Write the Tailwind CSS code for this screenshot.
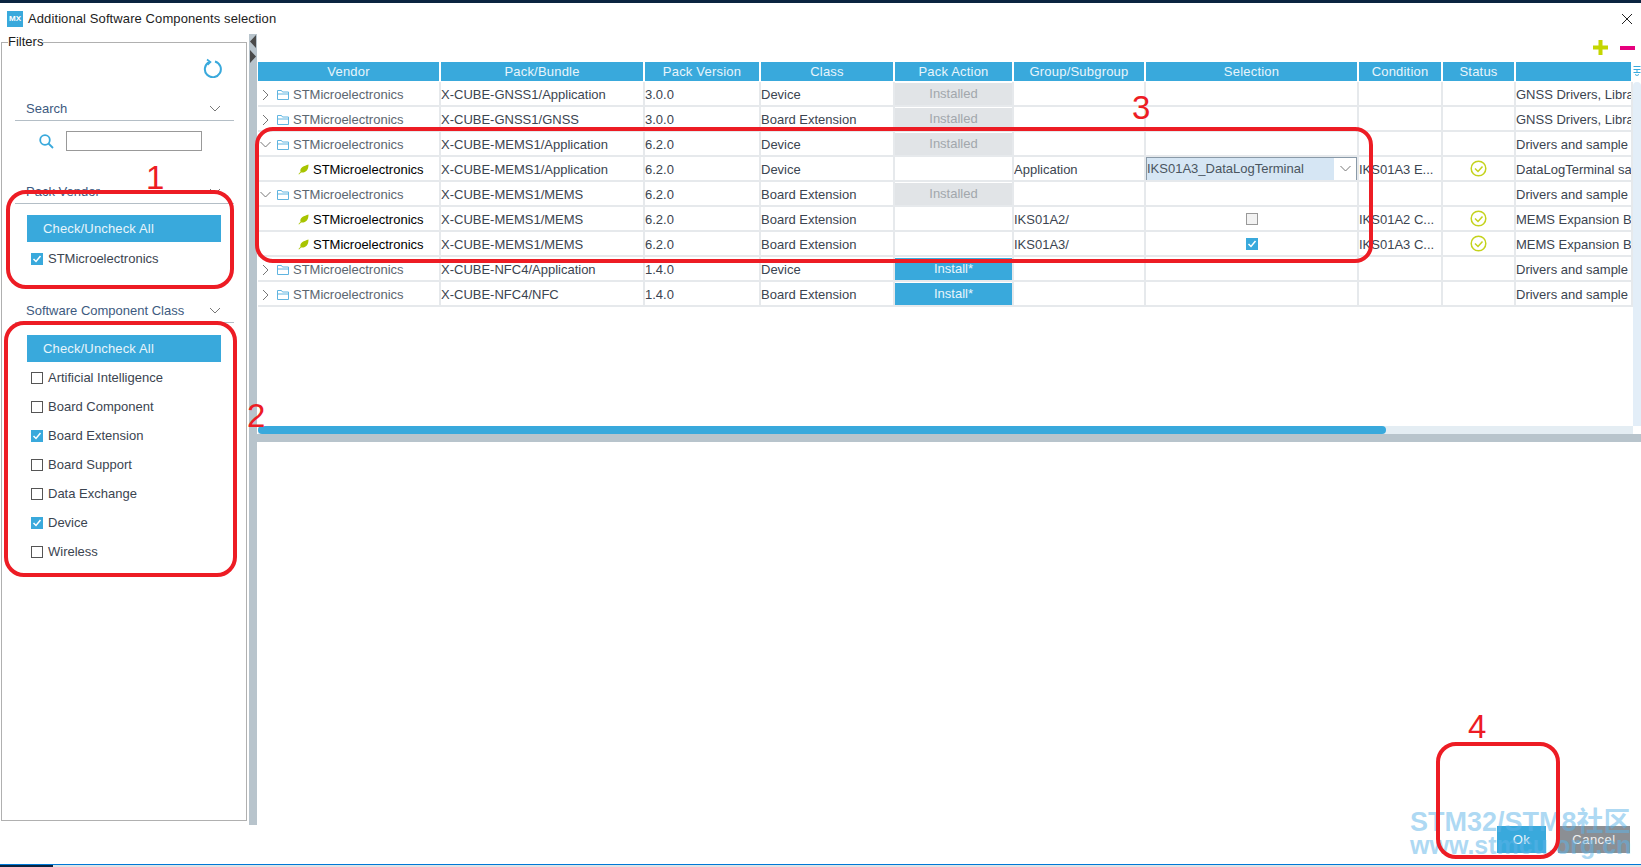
<!DOCTYPE html>
<html lang="en">
<head>
    <meta charset="UTF-8">
    <title>Additional Software Components selection</title>
    <script src="https://cdn.jsdelivr.net/npm/@tailwindcss/browser@4"></script>
</head>
<body class="bg-white font-['Liberation_Sans',sans-serif] text-[13px] text-[#3b4450] overflow-hidden">
<div class="relative flex flex-col w-[1641px] h-[867px]">
    <div class="h-[3px] bg-[#0b2440] shrink-0"></div>

    <div class="h-[31px] shrink-0 flex items-center pl-[7px] pr-[8px]">
        <div class="w-[16px] h-[16px] bg-[#39a9dc] text-white text-[8px] font-bold flex items-center justify-center">MX</div>
        <span class="ml-[5px] text-[#1c1c1c] tracking-[0.1px]">Additional Software Components selection</span>
        <svg class="ml-auto" width="12" height="12" viewBox="0 0 12 12" fill="none" stroke="#222" stroke-width="1"><path d="M1 1l10 10M11 1L1 11"/></svg>
    </div>

    <div class="h-[791px] shrink-0 flex">
        <div class="w-[249px] shrink-0 pl-[1px] pb-[4px]">
            <fieldset class="w-[246px] h-full border border-[#b0b0b0]">
                <legend class="ml-[6px] h-[16px] leading-[16px] text-[#1c1c1c]">Filters</legend>
                <div class="mt-[8px] h-[20px] flex justify-end pr-[24px]">
                    <svg width="20" height="20" viewBox="0 0 20 20" fill="none" stroke="#39a9dc" stroke-width="2"><path d="M7 4.200A8 8 0 1 0 13 3.500"/><path d="M5 1.500l3.500 2.600L5.500 7" stroke-width="1.600"/></svg>
                </div>

                <div class="mt-[20px] ml-[13px] mr-[12px] h-[23px] border-b border-[#b4bec6] pl-[11px] flex items-center justify-between pr-[14px] text-[#3d5a80]">
                    <span>Search</span>
                    <svg width="10" height="6" viewBox="0 0 10 6" fill="none" stroke="#777"><path d="M0 0l5 5 5-5"/></svg>
                </div>
                <div class="mt-[10px] h-[20px] flex items-center pl-[37px]">
                    <svg width="15" height="15" viewBox="0 0 15 15" fill="none" stroke="#39a9dc" stroke-width="1.800"><circle cx="6" cy="6" r="4.800"/><path d="M9.500 9.500l4.500 4.500"/></svg>
                    <input type="text" class="ml-[12px] w-[136px] h-[20px] border border-[#999]">
                </div>

                <div class="mt-[30px] ml-[13px] mr-[12px] h-[23px] border-b border-[#b4bec6] pl-[11px] flex items-center justify-between pr-[14px] text-[#3d5a80]">
                    <span>Pack Vendor</span>
                    <svg width="10" height="6" viewBox="0 0 10 6" fill="none" stroke="#777"><path d="M0 0l5 5 5-5"/></svg>
                </div>
                <button class="block mt-[11px] ml-[25px] w-[194px] h-[27px] bg-[#39a9dc] text-[#e8f5fb] text-left pl-[16px] tracking-[0.15px]">Check/Uncheck All</button>
                <div class="mt-[2px] h-[29px] flex items-center pl-[29px]" data-check="1">STMicroelectronics</div>

                <div class="mt-[27px] ml-[13px] mr-[12px] h-[23px] border-b border-[#b4bec6] pl-[11px] flex items-center justify-between pr-[14px] text-[#3d5a80]">
                    <span>Software Component Class</span>
                    <svg width="10" height="6" viewBox="0 0 10 6" fill="none" stroke="#777"><path d="M0 0l5 5 5-5"/></svg>
                </div>
                <button class="block mt-[12px] ml-[25px] w-[194px] h-[27px] bg-[#39a9dc] text-[#e8f5fb] text-left pl-[16px] tracking-[0.15px]">Check/Uncheck All</button>
                <div class="mt-[1px] h-[29px] flex items-center pl-[29px]" data-check="0">Artificial Intelligence</div>
                <div class="h-[29px] flex items-center pl-[29px]" data-check="0">Board Component</div>
                <div class="h-[29px] flex items-center pl-[29px]" data-check="1">Board Extension</div>
                <div class="h-[29px] flex items-center pl-[29px]" data-check="0">Board Support</div>
                <div class="h-[29px] flex items-center pl-[29px]" data-check="0">Data Exchange</div>
                <div class="h-[29px] flex items-center pl-[29px]" data-check="1">Device</div>
                <div class="h-[29px] flex items-center pl-[29px]" data-check="0">Wireless</div>
            </fieldset>
        </div>

        <!-- vertical splitter -->
        <div class="w-[8px] shrink-0 bg-[#b8c4cc] flex flex-col">
            <svg width="8" height="30" viewBox="0 0 8 30" fill="#4a4a4a"><path d="M7 1v13L1 7.500zM1 16v13l6-6.500z"/></svg>
        </div>

        <div class="flex-1 min-w-0 flex flex-col">
            <div class="h-[400px] shrink-0 relative pl-[1px] overflow-hidden">
                <div class="h-[28px] flex items-start justify-end gap-[12px] pt-[6px] pr-[6px]">
                    <svg width="15" height="15" viewBox="0 0 15 15" fill="#c4d600"><path d="M5.500 0h4v5.500H15v4H9.500V15h-4V9.500H0v-4h5.500z"/></svg>
                    <div class="w-[15px] h-[4px] mt-[6px] bg-[#e6007e]"></div>
                </div>
                <div id="head" class="w-[1376px] grid grid-cols-[183px_204px_116px_134px_119px_132px_213px_84px_73px_117px] h-[20px]"></div>
                <div id="rows" class="w-[1376px]"></div>
                <!-- scrollbars -->
                <svg class="absolute right-0 top-[32px]" width="8" height="10" viewBox="0 0 8 10" fill="none" stroke="#39a9dc"><path d="M.5 .5h7M.5 3.500h7M.5 6.500h7M4 3.500v3M2 8.500l2 1 2-1"/></svg>
                <div class="absolute right-0 top-[48px] bottom-[8px] w-[8px] bg-[#e3eef8] rounded-t-[4px]"></div>
                <div class="absolute left-[1px] right-[8px] bottom-0 h-[8px] bg-[#e4edf3]">
                    <div class="w-[1128px] h-full bg-[#39a9dc] rounded-[4px]"></div>
                </div>
            </div>
            <div class="h-[8px] shrink-0 bg-[#b8c4cc]"></div>
        </div>
    </div>

    <div class="flex-1 flex justify-end gap-[12px] pt-[1px] pr-[11px]">
        <button class="w-[49px] h-[27px] bg-[#39a9dc] text-[#e8f5fb] tracking-[0.5px]">Ok</button>
        <button class="w-[72px] h-[27px] bg-[#8b8f94] text-[#f0f0f0] tracking-[0.5px]">Cancel</button>
    </div>

    <!-- taskbar sliver -->
    <div class="h-[3px] shrink-0 flex border-t border-[#0078d7]">
        <div class="w-[53px] bg-[#0b2440]"></div>
        <div class="flex-1 bg-[#dfe3e6]"></div>
    </div>

    <!-- watermark over the dialog corner -->
    <div class="absolute left-[1410px] top-[809px] text-[#5db3e8]/50 font-bold leading-none pointer-events-none font-['Liberation_Sans','Noto_Sans_CJK_SC',sans-serif]">
        <div class="text-[27px] whitespace-nowrap">STM32/STM8社区</div>
        <div class="mt-[-3px] text-[25px] whitespace-nowrap">www.stmcu.org.cn</div>
    </div>

    <!-- hand drawn annotations -->
    <svg class="absolute inset-0 pointer-events-none" width="1641" height="867" fill="none" stroke="#ed1c24" stroke-width="4">
        <rect x="8" y="192" width="224" height="95" rx="18"/>
        <rect x="6" y="323" width="229" height="252" rx="18"/>
        <rect x="257" y="129" width="1114" height="132" rx="16"/>
        <rect x="1438" y="744" width="120" height="113" rx="18"/>
    </svg>
    <div class="absolute left-[146px] top-[160px] text-[33px] leading-[36px] text-[#ed1c24]">1</div>
    <div class="absolute left-[247px] top-[398px] text-[33px] leading-[36px] text-[#ed1c24]">2</div>
    <div class="absolute left-[1132px] top-[90px] text-[33px] leading-[36px] text-[#ed1c24]">3</div>
    <div class="absolute left-[1468px] top-[709px] text-[33px] leading-[36px] text-[#ed1c24]">4</div>
</div>
<script>
    const chevronRight = '<svg width="7" height="12" viewBox="0 0 7 12" fill="none" stroke="#777"><path d="M1 1l5 5-5 5"/></svg>'
    const chevronDown = '<svg width="11" height="7" viewBox="0 0 11 7" fill="none" stroke="#777"><path d="M.5 1l5 5 5-5"/></svg>'
    const folder = '<svg width="12" height="10" viewBox="0 0 12 10" fill="none" stroke="#5fb4e0"><path d="M.5 9.500v-9h4l1 1.500h6v7.500zM.5 4h11"/></svg>'
    const leaf = '<svg width="11" height="11" viewBox="0 0 11 11" fill="#a8c400"><path d="M10.500.5C10.500 6 8 9 3 8.500L1 10.500.5 10l2-2.200C1.500 3.500 6 2 10.500.5z"/></svg>'
    const okIcon = '<svg width="17" height="17" viewBox="0 0 17 17" fill="none" stroke="#c4d21c" stroke-width="1.500"><circle cx="8.500" cy="8.500" r="7.300"/><path d="M5 8.500l3 3 4.500-5"/></svg>'
    const boxOn = '<span class="inline-flex items-center justify-center shrink-0 w-[12px] h-[12px] bg-[#39a9dc]"><svg width="10" height="10" viewBox="0 0 10 10" fill="none" stroke="#fff" stroke-width="1.500"><path d="M1.500 5l2.500 2.500 4.500-5.500"/></svg></span>'
    const boxOff = '<span class="inline-block shrink-0 w-[12px] h-[12px] border border-[#555] bg-white"></span>'
    const boxOffGrey = '<span class="inline-block shrink-0 w-[12px] h-[12px] border border-[#999] bg-[#f2f2f2]"></span>'

    document.querySelectorAll('[data-check]').forEach(el => {
        const label = el.textContent
        el.innerHTML = (el.dataset.check === '1' ? boxOn : boxOff) + '<span class="ml-[5px]">' + label + '</span>'
    })

    const headers = ['Vendor', 'Pack/Bundle', 'Pack Version', 'Class', 'Pack Action', 'Group/Subgroup', 'Selection', 'Condition', 'Status', '']
    document.getElementById('head').innerHTML = headers.map(h =>
        '<div class="mr-[2px] h-[19px] bg-[#39a9dc] text-[#e8f5fb] flex items-center justify-center tracking-[0.2px]">' + h + '</div>').join('')

    const gnss = 'GNSS Drivers, Libraries and Applications'
    const drivers = 'Drivers and sample applications for sensors'
    const mems = 'MEMS Expansion Board drivers'
    const installed = '<div class="w-full h-[22px] bg-[#e1e4e7] text-[#a2a7ac] flex items-center justify-center">Installed</div>'
    const install = '<div class="w-full h-[22px] bg-[#39a9dc] text-[#e8f5fb] flex items-center justify-center">Install*</div>'
    const dropdown = '<div class="w-full h-[24px] border border-[#8a9aa8] flex items-center bg-white"><span class="flex-1 h-full bg-[#d6e6f4] flex items-center text-[#4a5560]">IKS01A3_DataLogTerminal</span><span class="w-[22px] flex justify-center">' + chevronDown + '</span></div>'

    // [kind, pack, version, class, action, group, selection, condition, status, description]
    const rows = [
        ['closed', 'X-CUBE-GNSS1/Application', '3.0.0', 'Device', installed, '', '', '', '', gnss],
        ['closed', 'X-CUBE-GNSS1/GNSS', '3.0.0', 'Board Extension', installed, '', '', '', '', gnss],
        ['open', 'X-CUBE-MEMS1/Application', '6.2.0', 'Device', installed, '', '', '', '', drivers],
        ['child', 'X-CUBE-MEMS1/Application', '6.2.0', 'Device', '', 'Application', dropdown, 'IKS01A3 E...', okIcon, 'DataLogTerminal sample application'],
        ['open', 'X-CUBE-MEMS1/MEMS', '6.2.0', 'Board Extension', installed, '', '', '', '', drivers],
        ['child', 'X-CUBE-MEMS1/MEMS', '6.2.0', 'Board Extension', '', 'IKS01A2/', boxOffGrey, 'IKS01A2 C...', okIcon, mems],
        ['child', 'X-CUBE-MEMS1/MEMS', '6.2.0', 'Board Extension', '', 'IKS01A3/', boxOn, 'IKS01A3 C...', okIcon, mems],
        ['closed', 'X-CUBE-NFC4/Application', '1.4.0', 'Device', install, '', '', '', '', drivers],
        ['closed', 'X-CUBE-NFC4/NFC', '1.4.0', 'Board Extension', install, '', '', '', '', drivers],
    ]

    function vendorCell(kind) {
        if (kind === 'child') {
            return '<div class="flex items-center pl-[40px] pt-[2px] border-r-2 border-[#e6e9ec] overflow-hidden"><span class="w-[15px] shrink-0">' + leaf + '</span><span class="text-black whitespace-nowrap">STMicroelectronics</span></div>'
        }
        const arrow = kind === 'open' ? chevronDown : chevronRight
        return '<div class="flex items-center pt-[2px] border-r-2 border-[#e6e9ec] overflow-hidden"><span class="w-[14px] shrink-0 flex justify-center">' + arrow + '</span><span class="ml-[5px] shrink-0">' + folder + '</span><span class="ml-[4px] text-[#5c6670] whitespace-nowrap">STMicroelectronics</span></div>'
    }

    function textCell(value) {
        return '<div class="flex items-center pt-[2px] border-r-2 border-[#e6e9ec] overflow-hidden whitespace-nowrap">' + value + '</div>'
    }

    function centerCell(value) {
        return '<div class="flex items-center justify-center border-r-2 border-[#e6e9ec] overflow-hidden">' + value + '</div>'
    }

    document.getElementById('rows').innerHTML = rows.map(r =>
        '<div class="grid grid-cols-[183px_204px_116px_134px_119px_132px_213px_84px_73px_117px] h-[25px] border-b-2 border-[#e6e9ec]">'
        + vendorCell(r[0]) + textCell(r[1]) + textCell(r[2]) + textCell(r[3]) + centerCell(r[4])
        + textCell(r[5]) + centerCell(r[6]) + textCell(r[7]) + centerCell(r[8]) + textCell(r[9])
        + '</div>').join('')
</script>
</body>
</html>
